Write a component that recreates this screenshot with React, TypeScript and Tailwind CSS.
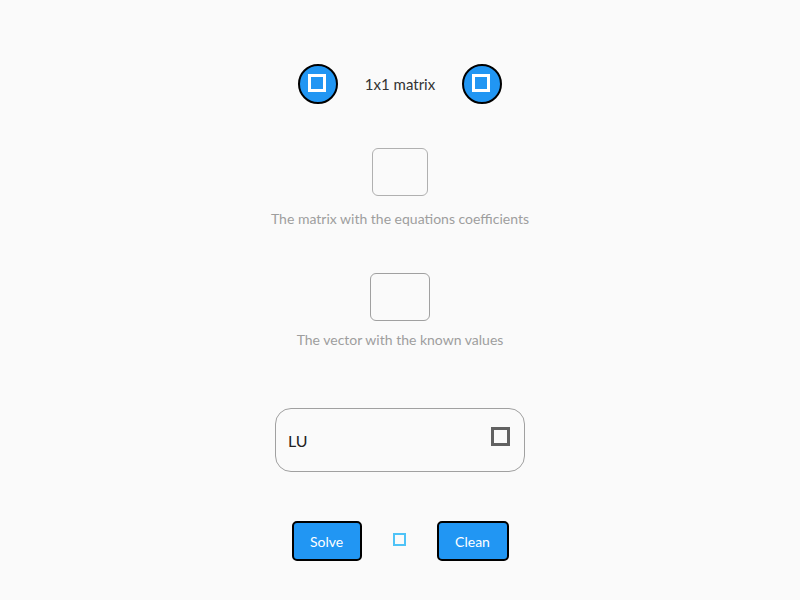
export default function App() {
  return (
    <div
      className="min-h-screen bg-[#fafafa] flex flex-col items-center pt-[64px]"
      style={{ fontFamily: "Lato, 'Open Sans', sans-serif" }}
    >
      <div className="flex items-center h-[40px]">
        <button className="w-[40px] h-[40px] rounded-full bg-[#2196f3] border-2 border-black flex items-center justify-center">
          <span className="block w-[18px] h-[18px] border-[3px] border-white -mt-[2px] -ml-[2px]" />
        </button>
        <span className="mx-[27px] text-[15px] text-[#333]">1x1 matrix</span>
        <button className="w-[40px] h-[40px] rounded-full bg-[#2196f3] border-2 border-black flex items-center justify-center">
          <span className="block w-[18px] h-[18px] border-[3px] border-white -mt-[2px] -ml-[2px]" />
        </button>
      </div>

      <input className="mt-[44px] w-[56px] h-[48px] border border-[#b0b0b0] rounded-[6px] bg-transparent" />
      <p className="mt-[13px] text-[14px] leading-[20px] text-[#9e9e9e]">
        The matrix with the equations coefficients
      </p>

      <input className="mt-[44px] w-[60px] h-[48px] border border-[#a0a0a0] rounded-[6px] bg-transparent" />
      <p className="mt-[9px] text-[14px] leading-[20px] text-[#9e9e9e]">
        The vector with the known values
      </p>

      <div className="mt-[58px] w-[250px] h-[64px] border border-[#a0a0a0] rounded-[16px] flex items-center justify-between pl-[12px] pr-[14px]">
        <span className="text-[16px] text-[#222] mt-[1px]">LU</span>
        <span className="block w-[19px] h-[19px] border-[3px] border-[#616161] -mt-[7px]" />
      </div>

      <div className="mt-[49px] flex items-center">
        <button className="w-[70px] h-[40px] bg-[#2196f3] border-2 border-black rounded-[5px] text-white text-[14px]">
          Solve
        </button>
        <span className="block mx-[31px] w-[13px] h-[13px] border-2 border-[#4fc3f7] -mt-[4px]" />
        <button className="w-[72px] h-[40px] bg-[#2196f3] border-2 border-black rounded-[5px] text-white text-[14px]">
          Clean
        </button>
      </div>
    </div>
  );
}
